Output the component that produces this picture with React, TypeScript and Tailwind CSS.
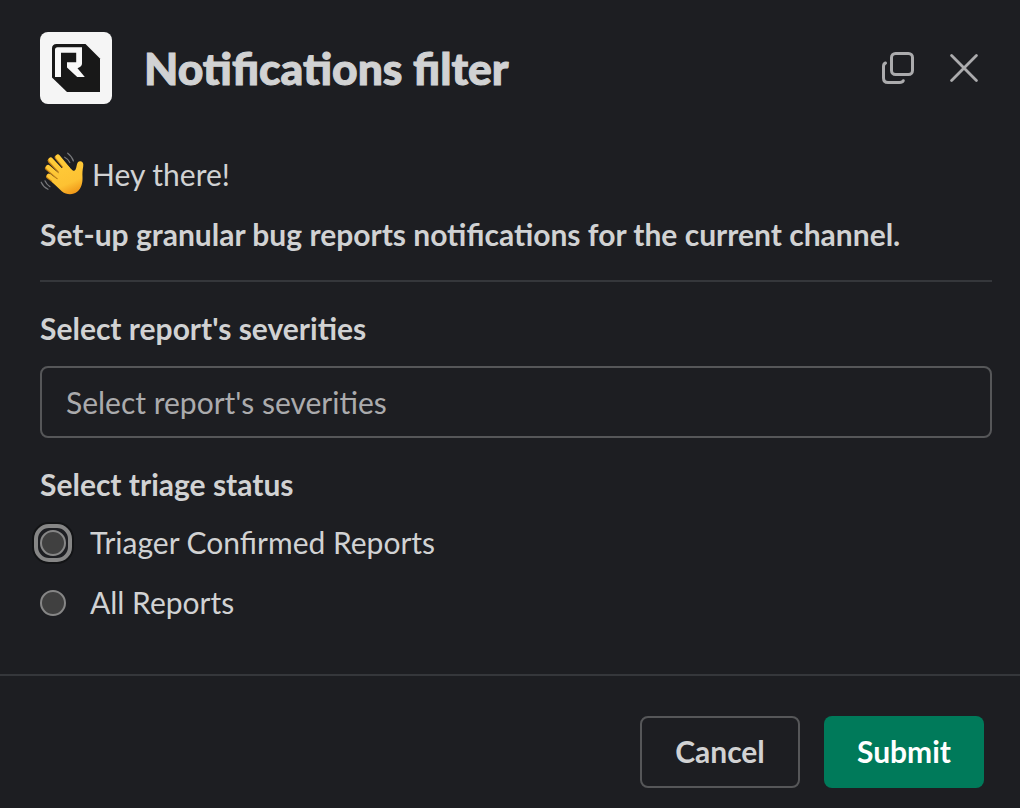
import { useState } from "react";

function Logo() {
  return (
    <svg viewBox="0 0 72 72" className="size-[72px] shrink-0" aria-hidden="true">
      <rect width="72" height="72" rx="8" fill="#f5f5f5" />
      <path d="M16.5 12H45.5L60 26.5V60H27L12 45.5V16.5Q12 12 16.5 12Z" fill="#181818" />
      <path
        d="M17.5 15.2H42V31.5Q42 34.5 37.5 36.2L44.8 45.1H37.2L27 35.5V30.2H36.2V20.8H21V45.1H15V17.7Q15 15.2 17.5 15.2Z"
        fill="#f8f8f8"
      />
    </svg>
  );
}

function WindowsIcon() {
  return (
    <svg viewBox="0 0 34 34" className="h-[34px] w-[34px]" fill="none" stroke="#ababad" strokeWidth="3" strokeLinecap="round" aria-hidden="true">
      <rect x="9.5" y="2.5" width="21" height="21" rx="4" />
      <path d="M3.5 12Q1.5 12.8 1.5 15.5V27Q1.5 31.5 6 31.5H17.5Q20.5 31.5 21.3 29.7" />
    </svg>
  );
}

function CloseIcon() {
  return (
    <svg viewBox="0 0 28 28" className="size-7" fill="none" stroke="#ababad" strokeWidth="2.8" strokeLinecap="round" aria-hidden="true">
      <path d="M1.6 1.6L26.4 26.4M26.4 1.6L1.6 26.4" />
    </svg>
  );
}

function WavingHand() {
  return (
    <svg viewBox="0 0 44 44" className="size-11 shrink-0" aria-hidden="true">
      <defs>
        <linearGradient id="skin" gradientUnits="userSpaceOnUse" x1="16" y1="6" x2="32" y2="43">
          <stop offset="0" stopColor="#ffcd3a" />
          <stop offset="0.7" stopColor="#fdc233" />
          <stop offset="1" stopColor="#ef9517" />
        </linearGradient>
      </defs>
      <g fill="none" stroke="#c98518" strokeLinecap="round">
        <path d="M17.3 5.4L27 17" strokeWidth="5.2" />
        <path d="M10.2 8.6L25 24" strokeWidth="5.2" />
        <path d="M7.6 16.1L22 28" strokeWidth="5.2" />
        <path d="M8.6 24.6L20 33" strokeWidth="5" />
      </g>
      <g fill="none" stroke="url(#skin)" strokeLinecap="round">
        <path d="M17.8 4.8L28 17" strokeWidth="4.6" />
        <path d="M10.8 7.8L26 24" strokeWidth="4.6" />
        <path d="M8.2 15.3L23 28" strokeWidth="4.6" />
        <path d="M9 23.8L21 33" strokeWidth="4.4" />
      </g>
      <path
        d="M19 18L26.5 12.8L32.8 18.5C34.8 19.8 36 17.5 36.7 13.5C37.2 10.4 38.5 9 40.5 9.2C43 9.6 43.7 11.5 43.2 14.5C42.5 18.3 42.3 21 42.5 25C42.8 31 41.4 36 37.5 39.6C33 43.4 26.5 43.1 22 39.6L11.5 29.6L18 27Z"
        fill="url(#skin)"
      />
      <g fill="none" stroke="#77787b" strokeWidth="1.2" strokeLinecap="round">
        <path d="M24.7 5.2Q28.2 7 29.8 10.6M27.7 1.2Q32 4.3 33.4 9" />
        <path d="M5 28.8Q6.3 32.4 10 34.7M1.2 30.2Q3.3 35 8 37.3" />
      </g>
    </svg>
  );
}

function RadioDot({ focused }: { focused: boolean }) {
  const dot = <span className="size-[26px] shrink-0 rounded-full border-2 border-[#868686] bg-[#404040]" />;
  if (!focused) {
    return <span className="mt-0.5 flex size-[26px]">{dot}</span>;
  }
  return (
    <span className="-mx-1.5 -mt-1 -mb-1.5 flex size-[38px] items-center justify-center rounded-[15px] border-4 border-[#868686] ring-2 ring-[#131416]">
      {dot}
    </span>
  );
}

const options = ["Triager Confirmed Reports", "All Reports"];

export default function App() {
  const [focused, setFocused] = useState(0);

  return (
    <main className="flex h-[808px] w-[1020px] flex-col overflow-hidden bg-[#1d1e22] font-['Lato',sans-serif] text-[30px] leading-[44px] text-[#d1d2d3]">
      <header className="flex h-[136px] shrink-0 items-center pr-[42px] pl-10">
        <Logo />
        <h1 className="ml-[32px] flex-1 text-[44.4px] leading-[56px] font-black [-webkit-text-stroke:1px_#d1d2d3]">Notifications filter</h1>
        <button type="button" aria-label="Open in new window" className="mr-[34px]">
          <WindowsIcon />
        </button>
        <button type="button" aria-label="Close">
          <CloseIcon />
        </button>
      </header>

      <section className="flex flex-1 flex-col pt-4 pr-7 pl-10">
        <p className="flex items-center gap-2">
          <WavingHand />
          <span>Hey there!</span>
        </p>
        <p className="mt-4 font-bold">Set-up granular bug reports notifications for the current channel.</p>
        <hr className="mt-6 border-t-2 border-[#35373b]" />
        <label htmlFor="severities" className="mt-6 font-bold">
          Select report's severities
        </label>
        <input
          id="severities"
          placeholder="Select report's severities"
          className="mt-4 h-[72px] shrink-0 rounded-lg border-2 border-[#565759] bg-transparent px-6 outline-none placeholder:text-[#ababad]"
        />
        <h2 className="mt-6 font-bold">Select triage status</h2>
        <div className="mt-3.5 flex flex-col gap-4">
          {options.map((option, index) => (
            <button
              key={option}
              type="button"
              role="radio"
              aria-checked="false"
              onClick={() => setFocused(index)}
              className="flex h-11 items-center text-left outline-none"
            >
              <RadioDot focused={index === focused} />
              <span className="ml-6">{option}</span>
            </button>
          ))}
        </div>
      </section>

      <footer className="flex h-[134px] shrink-0 items-start justify-end gap-6 border-t-2 border-[#35373b] pt-10 pr-9 font-bold">
        <button type="button" className="h-[72px] w-40 rounded-lg border-2 border-[#565759] pb-0.5">
          Cancel
        </button>
        <button type="button" className="h-[72px] w-40 rounded-lg bg-[#007a5a] pb-0.5 text-white">
          Submit
        </button>
      </footer>
    </main>
  );
}
